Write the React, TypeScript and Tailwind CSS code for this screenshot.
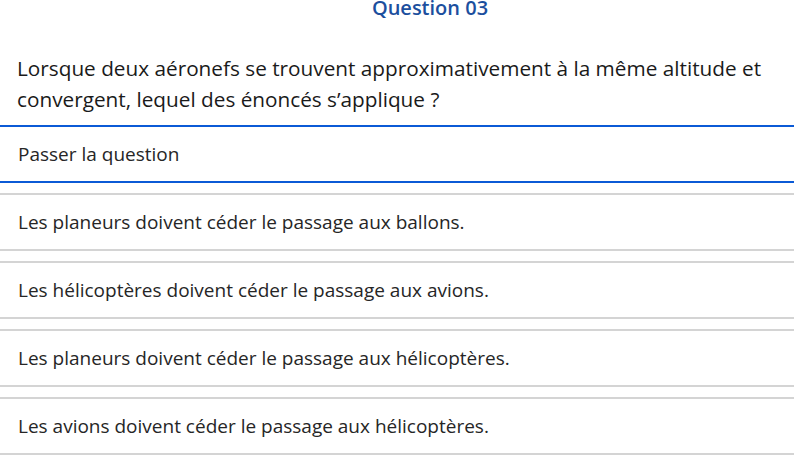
const options = [
  "Les planeurs doivent céder le passage aux ballons.",
  "Les hélicoptères doivent céder le passage aux avions.",
  "Les planeurs doivent céder le passage aux hélicoptères.",
  "Les avions doivent céder le passage aux hélicoptères.",
];

export default function App() {
  return (
    <div className="w-[794px] h-[473px] overflow-hidden bg-white font-['Open_Sans',sans-serif]">
      <div className="h-[16px] pl-[66px] text-center text-[20px] leading-[16px] font-semibold text-[#1c4f9e]">
        Question 03
      </div>

      <p className="mt-[37px] h-[62px] px-[17px] text-[20.75px] leading-[31px] text-[#1a1a1a]">
        Lorsque deux aéronefs se trouvent approximativement à la même altitude et convergent, lequel des énoncés s’applique ?
      </p>

      <div className="mt-[10px] border-y-2 border-[#0b5ad6] h-[58px] flex items-center px-[18px] text-[19px] text-[#262626]">
        Passer la question
      </div>

      <div className="mt-[10px] flex flex-col gap-[10px]">
        {options.map((opt) => (
          <div
            key={opt}
            className="border-y-2 border-[#d4d4d4] h-[58px] flex items-center px-[18px] text-[19px] text-[#262626]"
          >
            {opt}
          </div>
        ))}
      </div>
    </div>
  );
}
